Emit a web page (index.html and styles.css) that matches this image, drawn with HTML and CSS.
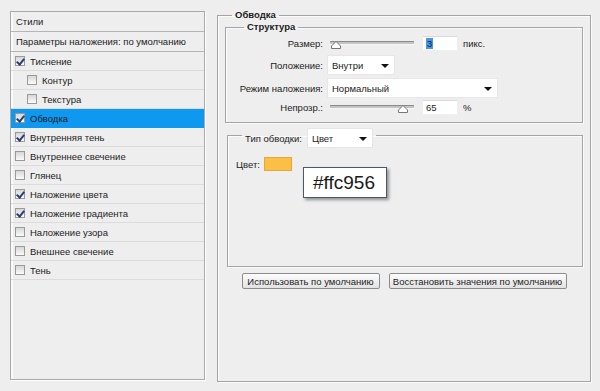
FILE: index.html
```html
<!DOCTYPE html>
<html>
<head>
    <link rel="stylesheet" href="styles.css">
</head>
<body>
    <div class="window">
        <div class="styles-panel">
            <div class="panel-head">Стили</div>
            <div class="panel-row">Параметры наложения: по умолчанию</div>
            <div class="layer-row"><span class="cb checked"></span>Тиснение</div>
            <div class="layer-row sub"><span class="cb"></span>Контур</div>
            <div class="layer-row sub"><span class="cb"></span>Текстура</div>
            <div class="layer-row active"><span class="cb checked"></span>Обводка</div>
            <div class="layer-row"><span class="cb checked"></span>Внутренняя тень</div>
            <div class="layer-row"><span class="cb"></span>Внутреннее свечение</div>
            <div class="layer-row"><span class="cb"></span>Глянец</div>
            <div class="layer-row"><span class="cb checked"></span>Наложение цвета</div>
            <div class="layer-row"><span class="cb checked"></span>Наложение градиента</div>
            <div class="layer-row"><span class="cb"></span>Наложение узора</div>
            <div class="layer-row"><span class="cb"></span>Внешнее свечение</div>
            <div class="layer-row"><span class="cb"></span>Тень</div>
        </div>

        <fieldset class="group main">
            <legend>Обводка</legend>

            <fieldset class="group structure">
                <legend>Структура</legend>
                <div class="row first">
                    <label>Размер:</label>
                    <div class="slider">
                        <div class="track"></div>
                        <svg class="thumb" style="left: 1px" width="10" height="8" viewBox="0 0 10 8"><path d="M5 0.5 L9.5 5 L9.5 7.5 L0.5 7.5 L0.5 5 Z" fill="#fff" stroke="#777"/></svg>
                    </div>
                    <div class="num"><span class="sel">3</span></div>
                    <span class="unit">пикс.</span>
                </div>
                <div class="row pos">
                    <label>Положение:</label>
                    <div class="select short">Внутри</div>
                </div>
                <div class="row mode">
                    <label>Режим наложения:</label>
                    <div class="select long">Нормальный</div>
                </div>
                <div class="row opacity">
                    <label>Непрозр.:</label>
                    <div class="slider">
                        <div class="track"></div>
                        <svg class="thumb" style="left: 68px" width="10" height="8" viewBox="0 0 10 8"><path d="M5 0.5 L9.5 5 L9.5 7.5 L0.5 7.5 L0.5 5 Z" fill="#fff" stroke="#777"/></svg>
                    </div>
                    <div class="num">65</div>
                    <span class="unit">%</span>
                </div>
            </fieldset>

            <fieldset class="group fill">
                <legend class="fill-legend"><span class="fill-label">Тип обводки:</span> <div class="select type">Цвет</div></legend>
                <div class="fill-body">
                    <div class="color-row">
                        Цвет: <span class="swatch"></span>
                        <div class="tooltip">#ffc956</div>
                    </div>
                </div>
            </fieldset>

            <div class="buttons">
                <button type="button" class="btn use">Использовать по умолчанию</button>
                <button type="button" class="btn reset">Восстановить значения по умолчанию</button>
            </div>
        </fieldset>
    </div>
</body>
</html>
```

FILE: styles.css
```css
body {
    margin: 0;
    background-color: #eeeeee;
    font-family: "Liberation Sans", Arial, sans-serif;
    font-size: 9.5px;
    color: #1c1c1c;
}
.window {
    display: flex;
    align-items: flex-start;
    width: 600px;
    height: 391px;
}

/* left list */
.styles-panel {
    box-sizing: border-box;
    width: 195px;
    height: 369px;
    margin: 11px 0 0 10px;
    border: 1px solid #a9a9a9;
    box-shadow: inset 2px 0 0 #fafafa, 1px 1px 0 #fff;
}
.panel-head {
    height: 19px;
    line-height: 19px;
    padding-left: 5px;
    border-bottom: 1px solid #b5b5b5;
}
.panel-row {
    height: 19px;
    line-height: 20px;
    padding-left: 5px;
    border-bottom: 1px solid #b5b5b5;
}
.layer-row {
    display: flex;
    align-items: center;
    height: 18px;
    padding-left: 4px;
    border-bottom: 1px solid #dcdcdc;
}
.layer-row.sub {
    padding-left: 16px;
}
.layer-row.active {
    background-color: #0e98f0;
    border-bottom-color: #0e98f0;
}
.cb {
    position: relative;
    box-sizing: border-box;
    width: 10px;
    height: 10px;
    margin-right: 5px;
    border: 1px solid #9a9a9a;
    background: linear-gradient(#d6d6d6, #fbfbfb);
}
.cb.checked::after {
    content: "";
    position: absolute;
    left: 2px;
    top: 0;
    width: 3px;
    height: 6px;
    border-right: 2px solid #2a3f6e;
    border-bottom: 2px solid #2a3f6e;
    transform: rotate(40deg);
}

/* group boxes */
.group {
    margin: 0;
    padding: 0;
    border: 1px solid #a4a4a4;
    box-shadow: inset 1px 1px 0 #fbfbfb, 1px 1px 0 #fbfbfb;
}
.group legend {
    padding: 0 3px;
    font-weight: bold;
    line-height: 12px;
}
.main {
    box-sizing: border-box;
    width: 374px;
    height: 373px;
    margin: 9px 0 0 12px;
}
.main > legend {
    margin-left: 14px;
}
.structure {
    margin: 0 7px;
    padding-bottom: 8px;
}
.structure > legend {
    margin-left: 18px;
}

.row {
    display: flex;
    align-items: center;
}
.row label {
    width: 97px;
    margin-right: 4px;
    text-align: right;
}
.row.first {
    height: 14px;
    margin-top: 3px;
}
.row.pos {
    margin-top: 5px;
}
.row.mode {
    margin-top: 3px;
}
.row.opacity {
    height: 14px;
    margin-top: 2px;
}

.slider {
    position: relative;
    width: 84px;
    height: 14px;
    margin-left: 3px;
}
.track {
    height: 2px;
    margin-top: 5px;
    border-top: 1px solid #8a8a8a;
    background-color: #c4c4c4;
    border-bottom: 1px solid #f6f6f6;
}
.thumb {
    position: absolute;
    top: 5px;
}
.num {
    box-sizing: border-box;
    width: 34px;
    height: 14px;
    margin-left: 9px;
    padding-left: 3px;
    line-height: 14px;
    background-color: #fff;
    border-top: 1px solid #dadada;
}
.sel {
    background-color: #4a97e2;
    color: #10243c;
    padding: 0 1px;
}
.unit {
    margin-left: 6px;
}

.select {
    position: relative;
    box-sizing: border-box;
    height: 20px;
    line-height: 20px;
    padding-left: 4px;
    background-color: #fff;
    border: 1px solid #e6e6e6;
    font-weight: normal;
}
.select::after {
    content: "";
    position: absolute;
    right: 5px;
    top: 8px;
    border-left: 4px solid transparent;
    border-right: 4px solid transparent;
    border-top: 4px solid #111;
}
.select.short {
    width: 68px;
}
.select.long {
    width: 171px;
}
.select.type {
    width: 66px;
    margin-left: 5px;
    margin-bottom: -6px;
}

.fill {
    margin: 5px 7px 0 9px;
}
.fill-legend {
    display: flex;
    align-items: flex-start;
    margin-left: 14px;
    font-weight: normal !important;
    line-height: 14px !important;
}
.fill-label {
    position: relative;
    top: 4px;
}
.fill-body {
    height: 109px;
}
.color-row {
    position: relative;
    display: flex;
    align-items: center;
    height: 14px;
    margin: 15px 0 0 8px;
}
.swatch {
    box-sizing: border-box;
    width: 28px;
    height: 14px;
    margin-left: 4px;
    background-color: #fcbf45;
    border: 1px solid #e4a83a;
}
.tooltip {
    position: absolute;
    left: 67px;
    top: 10px;
    box-sizing: border-box;
    width: 84px;
    height: 31px;
    padding-left: 9px;
    line-height: 29px;
    font-size: 19px;
    color: #1a1a1a;
    background-color: #fff;
    border: 1px solid #4a5868;
    box-shadow: 2px 2px 3px rgba(0, 0, 0, 0.4);
}

.buttons {
    display: flex;
    justify-content: center;
    gap: 9px;
    margin-top: 6px;
}
.btn {
    height: 16px;
    padding: 0;
    white-space: nowrap;
    font-family: "Liberation Sans", Arial, sans-serif;
    font-size: 9.5px;
    color: #222;
    border: 1px solid #8c8c8c;
    border-radius: 2px;
    background: linear-gradient(#fdfdfd, #e2e2e2);
}
.btn.use {
    width: 138px;
}
.btn.reset {
    width: 178px;
}
```
